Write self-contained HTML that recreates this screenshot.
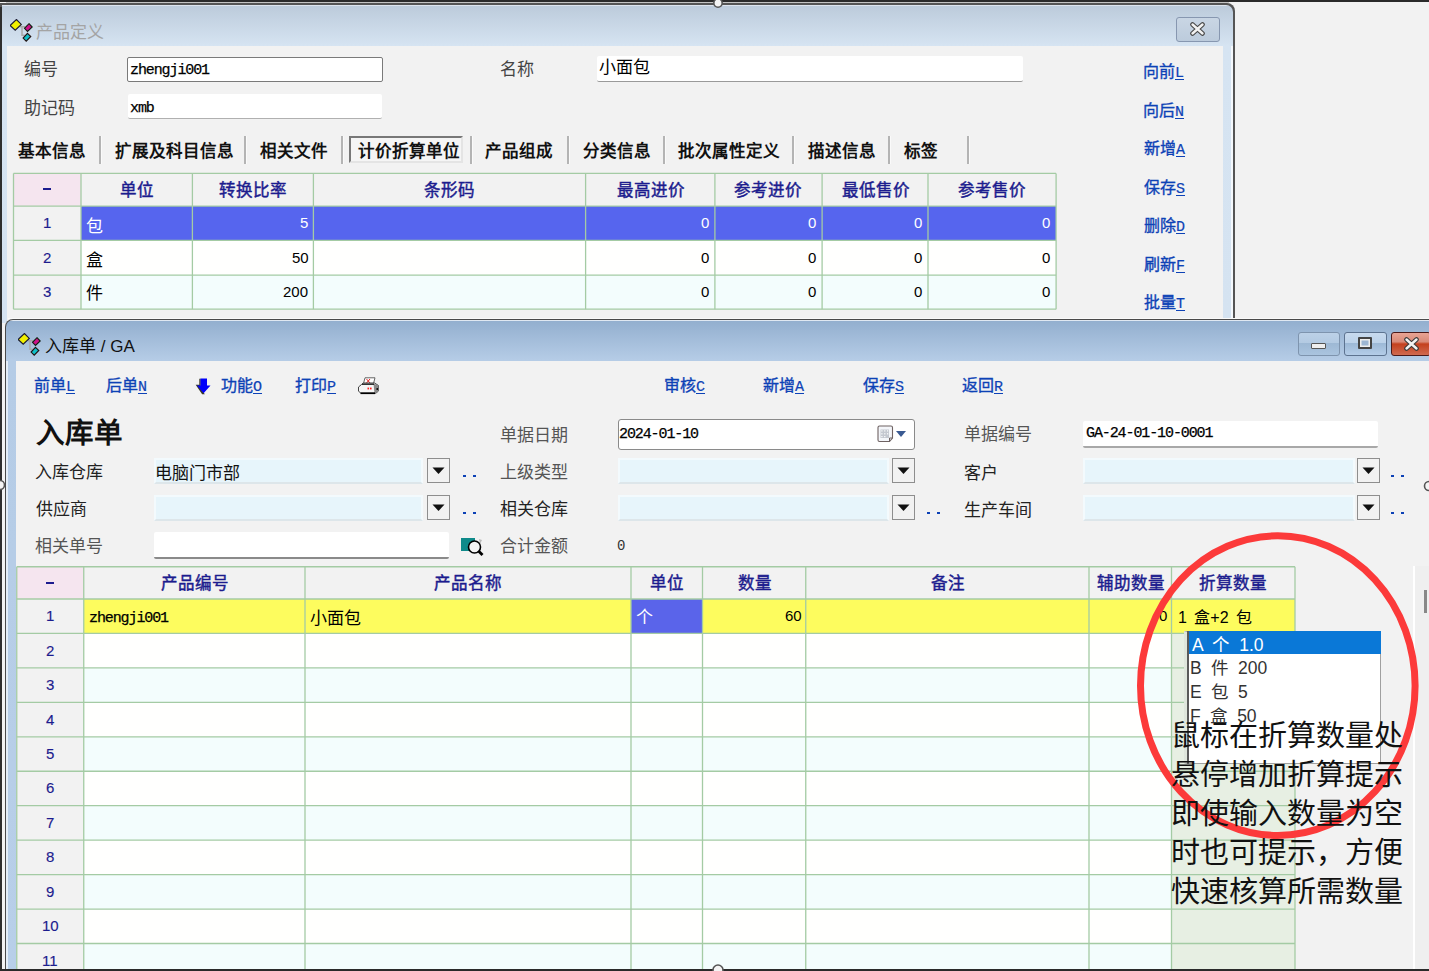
<!DOCTYPE html><html lang="zh-CN"><head><meta charset="utf-8"><style>html,body{margin:0;padding:0;width:1429px;height:971px;overflow:hidden;position:relative;background:#f0f0f0}</style></head><body><div style="position:absolute;left:0px;top:0px;width:1429px;height:971px;background:#f2f2f2"></div>
<div style="position:absolute;left:0px;top:0px;width:1429px;height:2px;background:#2a2a2a"></div>
<div style="position:absolute;left:6px;top:2px;width:1223px;height:1px;background:#c4c4c4"></div>
<div style="position:absolute;left:0px;top:3px;width:1234.5px;height:320px;background:#555;border-top-right-radius:8px"></div>
<div style="position:absolute;left:2px;top:5px;width:1230.5px;height:318px;background:linear-gradient(#dde4ee 0,#dde4ee 1px,#bccbdb 1px,#d6e4f2 41px,#d5e3f1);border-top-right-radius:7px"></div>
<div style="position:absolute;left:1231px;top:46px;width:1.5px;height:280px;background:#f4f8fc"></div>
<div style="position:absolute;left:0px;top:7px;width:2px;height:964px;background:#2e2e2e"></div>
<div style="position:absolute;left:7px;top:46px;width:1216px;height:280px;background:#f2f2f2"></div>
<svg style="position:absolute;left:10px;top:18.5px" width="26" height="24" viewBox="0 0 26 24"><path d="M9.6 7.7 H15 M12 7.7 V16.3 H14.7" stroke="#a8a8a8" stroke-width="1.5" fill="none"/><path d="M6.4 0.5 L11.3 5.4 L5.2 11.2 L0.1 6.5Z" fill="#f0f000" stroke="#1a1a30" stroke-width="1.1"/><path d="M19 4.7 L22.2 8 L17.5 12.4 L14.5 9.3Z" fill="#d0108a" stroke="#102010" stroke-width="1.1"/><path d="M17.5 14.4 L20.8 17.5 L16.2 22.2 L13.1 19.1Z" fill="#10c0c8" stroke="#201010" stroke-width="1.1"/></svg>
<div style="position:absolute;left:36px;top:18px;white-space:nowrap;line-height:normal;font-family:'Liberation Sans',sans-serif;font-size:17px;color:#a4a4a4">产品定义</div>
<div style="position:absolute;left:1176px;top:17px;width:44px;height:25px;box-sizing:border-box;border:1px solid #8797b0;border-radius:3px;background:linear-gradient(#c9d6e4,#bccbdc)"></div>
<svg style="position:absolute;left:1189px;top:22px" width="17" height="14" viewBox="0 0 17 14"><path d="M3.5 2.5 L13.5 11.5 M13.5 2.5 L3.5 11.5" stroke="#474747" stroke-width="4.6" stroke-linecap="round"/><path d="M3.5 2.5 L13.5 11.5 M13.5 2.5 L3.5 11.5" stroke="#f2f2f2" stroke-width="2.4" stroke-linecap="round"/></svg>
<div style="position:absolute;left:24px;top:55px;white-space:nowrap;line-height:normal;font-family:'Liberation Sans',sans-serif;font-size:17px;color:#444">编号</div>
<div style="position:absolute;left:24px;top:94px;white-space:nowrap;line-height:normal;font-family:'Liberation Sans',sans-serif;font-size:17px;color:#444">助记码</div>
<div style="position:absolute;left:500px;top:55px;white-space:nowrap;line-height:normal;font-family:'Liberation Sans',sans-serif;font-size:17px;color:#444">名称</div>
<div style="position:absolute;left:127px;top:57px;width:256px;height:25px;box-sizing:border-box;background:#fff;border:1px solid #7a7a7a;border-radius:2px"></div>
<div style="position:absolute;left:130px;top:62px;white-space:nowrap;line-height:normal;font-family:'Liberation Mono',monospace;font-size:15px;letter-spacing:-1.1px;color:#000;-webkit-text-stroke:0.25px #000">zhengji001</div>
<div style="position:absolute;left:128px;top:94px;width:254px;height:25px;box-sizing:border-box;background:#fff;border-bottom:1px solid #b0b0b0;border-radius:2px"></div>
<div style="position:absolute;left:130px;top:100px;white-space:nowrap;line-height:normal;font-family:'Liberation Mono',monospace;font-size:15px;letter-spacing:-1.1px;color:#000;-webkit-text-stroke:0.25px #000">xmb</div>
<div style="position:absolute;left:597px;top:55.5px;width:426px;height:26px;box-sizing:border-box;background:#fff;border-bottom:1.5px solid #9a9a9a;border-radius:2px"></div>
<div style="position:absolute;left:599px;top:53px;white-space:nowrap;line-height:normal;font-family:'Liberation Sans',sans-serif;font-size:17px;color:#000">小面包</div>
<div style="position:absolute;left:1143px;top:58px;white-space:nowrap;line-height:normal;font-family:'Liberation Sans',sans-serif;font-size:16px;color:#0d42b6;-webkit-text-stroke:0.35px #0d42b6">向前<span style="text-decoration:underline;text-underline-offset:2px;font-family:'Liberation Mono',monospace;font-size:15px;-webkit-text-stroke:0.2px">L</span></div>
<div style="position:absolute;left:1143px;top:97px;white-space:nowrap;line-height:normal;font-family:'Liberation Sans',sans-serif;font-size:16px;color:#0d42b6;-webkit-text-stroke:0.35px #0d42b6">向后<span style="text-decoration:underline;text-underline-offset:2px;font-family:'Liberation Mono',monospace;font-size:15px;-webkit-text-stroke:0.2px">N</span></div>
<div style="position:absolute;left:1144px;top:135px;white-space:nowrap;line-height:normal;font-family:'Liberation Sans',sans-serif;font-size:16px;color:#0d42b6;-webkit-text-stroke:0.35px #0d42b6">新增<span style="text-decoration:underline;text-underline-offset:2px;font-family:'Liberation Mono',monospace;font-size:15px;-webkit-text-stroke:0.2px">A</span></div>
<div style="position:absolute;left:1144px;top:174px;white-space:nowrap;line-height:normal;font-family:'Liberation Sans',sans-serif;font-size:16px;color:#0d42b6;-webkit-text-stroke:0.35px #0d42b6">保存<span style="text-decoration:underline;text-underline-offset:2px;font-family:'Liberation Mono',monospace;font-size:15px;-webkit-text-stroke:0.2px">S</span></div>
<div style="position:absolute;left:1144px;top:212px;white-space:nowrap;line-height:normal;font-family:'Liberation Sans',sans-serif;font-size:16px;color:#0d42b6;-webkit-text-stroke:0.35px #0d42b6">删除<span style="text-decoration:underline;text-underline-offset:2px;font-family:'Liberation Mono',monospace;font-size:15px;-webkit-text-stroke:0.2px">D</span></div>
<div style="position:absolute;left:1144px;top:251px;white-space:nowrap;line-height:normal;font-family:'Liberation Sans',sans-serif;font-size:16px;color:#0d42b6;-webkit-text-stroke:0.35px #0d42b6">刷新<span style="text-decoration:underline;text-underline-offset:2px;font-family:'Liberation Mono',monospace;font-size:15px;-webkit-text-stroke:0.2px">F</span></div>
<div style="position:absolute;left:1144px;top:289px;white-space:nowrap;line-height:normal;font-family:'Liberation Sans',sans-serif;font-size:16px;color:#0d42b6;-webkit-text-stroke:0.35px #0d42b6">批量<span style="text-decoration:underline;text-underline-offset:2px;font-family:'Liberation Mono',monospace;font-size:15px;-webkit-text-stroke:0.2px">T</span></div>
<div style="position:absolute;left:349px;top:136px;width:114px;height:27px;box-sizing:border-box;border:2px solid #787878;border-right-color:#e4e4e4;border-bottom-color:#e4e4e4;background:#f5f5f5"></div>
<div style="position:absolute;left:18px;top:138px;white-space:nowrap;line-height:normal;font-family:'Liberation Sans',sans-serif;font-size:16.5px;color:#111;font-weight:bold">基本信息</div>
<div style="position:absolute;left:115px;top:138px;white-space:nowrap;line-height:normal;font-family:'Liberation Sans',sans-serif;font-size:16.5px;color:#111;font-weight:bold">扩展及科目信息</div>
<div style="position:absolute;left:260px;top:138px;white-space:nowrap;line-height:normal;font-family:'Liberation Sans',sans-serif;font-size:16.5px;color:#111;font-weight:bold">相关文件</div>
<div style="position:absolute;left:358px;top:138px;white-space:nowrap;line-height:normal;font-family:'Liberation Sans',sans-serif;font-size:16.5px;color:#111;font-weight:bold">计价折算单位</div>
<div style="position:absolute;left:485px;top:138px;white-space:nowrap;line-height:normal;font-family:'Liberation Sans',sans-serif;font-size:16.5px;color:#111;font-weight:bold">产品组成</div>
<div style="position:absolute;left:583px;top:138px;white-space:nowrap;line-height:normal;font-family:'Liberation Sans',sans-serif;font-size:16.5px;color:#111;font-weight:bold">分类信息</div>
<div style="position:absolute;left:678px;top:138px;white-space:nowrap;line-height:normal;font-family:'Liberation Sans',sans-serif;font-size:16.5px;color:#111;font-weight:bold">批次属性定义</div>
<div style="position:absolute;left:808px;top:138px;white-space:nowrap;line-height:normal;font-family:'Liberation Sans',sans-serif;font-size:16.5px;color:#111;font-weight:bold">描述信息</div>
<div style="position:absolute;left:904px;top:138px;white-space:nowrap;line-height:normal;font-family:'Liberation Sans',sans-serif;font-size:16.5px;color:#111;font-weight:bold">标签</div>
<div style="position:absolute;left:99px;top:136px;width:2px;height:28px;background:#b4b4b4;border-right:1px solid #fafafa"></div>
<div style="position:absolute;left:244px;top:136px;width:2px;height:28px;background:#b4b4b4;border-right:1px solid #fafafa"></div>
<div style="position:absolute;left:341px;top:136px;width:2px;height:28px;background:#b4b4b4;border-right:1px solid #fafafa"></div>
<div style="position:absolute;left:470px;top:136px;width:2px;height:28px;background:#b4b4b4;border-right:1px solid #fafafa"></div>
<div style="position:absolute;left:566.5px;top:136px;width:2px;height:28px;background:#b4b4b4;border-right:1px solid #fafafa"></div>
<div style="position:absolute;left:662.5px;top:136px;width:2px;height:28px;background:#b4b4b4;border-right:1px solid #fafafa"></div>
<div style="position:absolute;left:792px;top:136px;width:2px;height:28px;background:#b4b4b4;border-right:1px solid #fafafa"></div>
<div style="position:absolute;left:888px;top:136px;width:2px;height:28px;background:#b4b4b4;border-right:1px solid #fafafa"></div>
<div style="position:absolute;left:967px;top:136px;width:2px;height:28px;background:#b4b4b4;border-right:1px solid #fafafa"></div>
<div style="position:absolute;left:13.5px;top:173.4px;width:67.5px;height:32.69999999999999px;background:#f5e5ef"></div>
<div style="position:absolute;left:81px;top:173.4px;width:111.4px;height:32.69999999999999px;background:#f2f2f2"></div>
<div style="position:absolute;left:192.4px;top:173.4px;width:120.99999999999997px;height:32.69999999999999px;background:#f2f2f2"></div>
<div style="position:absolute;left:313.4px;top:173.4px;width:272.20000000000005px;height:32.69999999999999px;background:#f2f2f2"></div>
<div style="position:absolute;left:585.6px;top:173.4px;width:129.29999999999995px;height:32.69999999999999px;background:#f2f2f2"></div>
<div style="position:absolute;left:714.9px;top:173.4px;width:107.20000000000005px;height:32.69999999999999px;background:#f2f2f2"></div>
<div style="position:absolute;left:822.1px;top:173.4px;width:105.89999999999998px;height:32.69999999999999px;background:#f2f2f2"></div>
<div style="position:absolute;left:928.0px;top:173.4px;width:128.0999999999999px;height:32.69999999999999px;background:#f2f2f2"></div>
<div style="position:absolute;left:13.5px;top:206.1px;width:67.5px;height:34.30000000000001px;background:#f2f2f2"></div>
<div style="position:absolute;left:81px;top:206.1px;width:111.4px;height:34.30000000000001px;background:#5665ee"></div>
<div style="position:absolute;left:192.4px;top:206.1px;width:120.99999999999997px;height:34.30000000000001px;background:#5665ee"></div>
<div style="position:absolute;left:313.4px;top:206.1px;width:272.20000000000005px;height:34.30000000000001px;background:#5665ee"></div>
<div style="position:absolute;left:585.6px;top:206.1px;width:129.29999999999995px;height:34.30000000000001px;background:#5665ee"></div>
<div style="position:absolute;left:714.9px;top:206.1px;width:107.20000000000005px;height:34.30000000000001px;background:#5665ee"></div>
<div style="position:absolute;left:822.1px;top:206.1px;width:105.89999999999998px;height:34.30000000000001px;background:#5665ee"></div>
<div style="position:absolute;left:928.0px;top:206.1px;width:128.0999999999999px;height:34.30000000000001px;background:#5665ee"></div>
<div style="position:absolute;left:13.5px;top:240.4px;width:67.5px;height:34.70000000000002px;background:#f2f2f2"></div>
<div style="position:absolute;left:81px;top:240.4px;width:111.4px;height:34.70000000000002px;background:#fffffe"></div>
<div style="position:absolute;left:192.4px;top:240.4px;width:120.99999999999997px;height:34.70000000000002px;background:#fffffe"></div>
<div style="position:absolute;left:313.4px;top:240.4px;width:272.20000000000005px;height:34.70000000000002px;background:#fffffe"></div>
<div style="position:absolute;left:585.6px;top:240.4px;width:129.29999999999995px;height:34.70000000000002px;background:#fffffe"></div>
<div style="position:absolute;left:714.9px;top:240.4px;width:107.20000000000005px;height:34.70000000000002px;background:#fffffe"></div>
<div style="position:absolute;left:822.1px;top:240.4px;width:105.89999999999998px;height:34.70000000000002px;background:#fffffe"></div>
<div style="position:absolute;left:928.0px;top:240.4px;width:128.0999999999999px;height:34.70000000000002px;background:#fffffe"></div>
<div style="position:absolute;left:13.5px;top:275.1px;width:67.5px;height:34.099999999999966px;background:#f2f2f2"></div>
<div style="position:absolute;left:81px;top:275.1px;width:111.4px;height:34.099999999999966px;background:#f3fdfd"></div>
<div style="position:absolute;left:192.4px;top:275.1px;width:120.99999999999997px;height:34.099999999999966px;background:#f3fdfd"></div>
<div style="position:absolute;left:313.4px;top:275.1px;width:272.20000000000005px;height:34.099999999999966px;background:#f3fdfd"></div>
<div style="position:absolute;left:585.6px;top:275.1px;width:129.29999999999995px;height:34.099999999999966px;background:#f3fdfd"></div>
<div style="position:absolute;left:714.9px;top:275.1px;width:107.20000000000005px;height:34.099999999999966px;background:#f3fdfd"></div>
<div style="position:absolute;left:822.1px;top:275.1px;width:105.89999999999998px;height:34.099999999999966px;background:#f3fdfd"></div>
<div style="position:absolute;left:928.0px;top:275.1px;width:128.0999999999999px;height:34.099999999999966px;background:#f3fdfd"></div>
<svg style="position:absolute;left:0;top:0" width="1429" height="971"><g stroke="#a4cba4" stroke-width="1.3" fill="none"><path d="M13.5 173.4 V309.2"/><path d="M81 173.4 V309.2"/><path d="M192.4 173.4 V309.2"/><path d="M313.4 173.4 V309.2"/><path d="M585.6 173.4 V309.2"/><path d="M714.9 173.4 V309.2"/><path d="M822.1 173.4 V309.2"/><path d="M928.0 173.4 V309.2"/><path d="M1056.1 173.4 V309.2"/><path d="M13.5 173.4 H1056.1"/><path d="M13.5 206.1 H1056.1"/><path d="M13.5 240.4 H1056.1"/><path d="M13.5 275.1 H1056.1"/><path d="M13.5 309.2 H1056.1"/></g></svg>
<div style="position:absolute;left:43.25px;top:188.4px;width:8px;height:2px;background:#1c1c8e"></div>
<div style="position:absolute;left:120px;top:177px;white-space:nowrap;line-height:normal;font-family:'Liberation Sans',sans-serif;font-size:16.5px;color:#1c1c8e;-webkit-text-stroke:0.45px #1c1c8e">单位</div>
<div style="position:absolute;left:219px;top:177px;white-space:nowrap;line-height:normal;font-family:'Liberation Sans',sans-serif;font-size:16.5px;color:#1c1c8e;-webkit-text-stroke:0.45px #1c1c8e">转换比率</div>
<div style="position:absolute;left:424px;top:177px;white-space:nowrap;line-height:normal;font-family:'Liberation Sans',sans-serif;font-size:16.5px;color:#1c1c8e;-webkit-text-stroke:0.45px #1c1c8e">条形码</div>
<div style="position:absolute;left:617px;top:177px;white-space:nowrap;line-height:normal;font-family:'Liberation Sans',sans-serif;font-size:16.5px;color:#1c1c8e;-webkit-text-stroke:0.45px #1c1c8e">最高进价</div>
<div style="position:absolute;left:734px;top:177px;white-space:nowrap;line-height:normal;font-family:'Liberation Sans',sans-serif;font-size:16.5px;color:#1c1c8e;-webkit-text-stroke:0.45px #1c1c8e">参考进价</div>
<div style="position:absolute;left:842px;top:177px;white-space:nowrap;line-height:normal;font-family:'Liberation Sans',sans-serif;font-size:16.5px;color:#1c1c8e;-webkit-text-stroke:0.45px #1c1c8e">最低售价</div>
<div style="position:absolute;left:958px;top:177px;white-space:nowrap;line-height:normal;font-family:'Liberation Sans',sans-serif;font-size:16.5px;color:#1c1c8e;-webkit-text-stroke:0.45px #1c1c8e">参考售价</div>
<div style="position:absolute;left:43px;top:214px;white-space:nowrap;line-height:normal;font-family:'Liberation Sans',sans-serif;font-size:15px;color:#1c1c8e;-webkit-text-stroke:0.15px #1c1c8e">1</div>
<div style="position:absolute;left:43px;top:249px;white-space:nowrap;line-height:normal;font-family:'Liberation Sans',sans-serif;font-size:15px;color:#1c1c8e;-webkit-text-stroke:0.15px #1c1c8e">2</div>
<div style="position:absolute;left:43px;top:283px;white-space:nowrap;line-height:normal;font-family:'Liberation Sans',sans-serif;font-size:15px;color:#1c1c8e;-webkit-text-stroke:0.15px #1c1c8e">3</div>
<div style="position:absolute;left:86px;top:212px;white-space:nowrap;line-height:normal;font-family:'Liberation Sans',sans-serif;font-size:17px;color:#fff">包</div>
<div style="position:absolute;left:300px;top:214px;white-space:nowrap;line-height:normal;font-family:'Liberation Sans',sans-serif;font-size:15px;color:#fff">5</div>
<div style="position:absolute;left:701px;top:214px;white-space:nowrap;line-height:normal;font-family:'Liberation Sans',sans-serif;font-size:15px;color:#fff">0</div>
<div style="position:absolute;left:808px;top:214px;white-space:nowrap;line-height:normal;font-family:'Liberation Sans',sans-serif;font-size:15px;color:#fff">0</div>
<div style="position:absolute;left:914px;top:214px;white-space:nowrap;line-height:normal;font-family:'Liberation Sans',sans-serif;font-size:15px;color:#fff">0</div>
<div style="position:absolute;left:1042px;top:214px;white-space:nowrap;line-height:normal;font-family:'Liberation Sans',sans-serif;font-size:15px;color:#fff">0</div>
<div style="position:absolute;left:86px;top:246px;white-space:nowrap;line-height:normal;font-family:'Liberation Sans',sans-serif;font-size:17px;color:#000">盒</div>
<div style="position:absolute;left:292px;top:249px;white-space:nowrap;line-height:normal;font-family:'Liberation Sans',sans-serif;font-size:15px;color:#000">50</div>
<div style="position:absolute;left:701px;top:249px;white-space:nowrap;line-height:normal;font-family:'Liberation Sans',sans-serif;font-size:15px;color:#000">0</div>
<div style="position:absolute;left:808px;top:249px;white-space:nowrap;line-height:normal;font-family:'Liberation Sans',sans-serif;font-size:15px;color:#000">0</div>
<div style="position:absolute;left:914px;top:249px;white-space:nowrap;line-height:normal;font-family:'Liberation Sans',sans-serif;font-size:15px;color:#000">0</div>
<div style="position:absolute;left:1042px;top:249px;white-space:nowrap;line-height:normal;font-family:'Liberation Sans',sans-serif;font-size:15px;color:#000">0</div>
<div style="position:absolute;left:86px;top:279px;white-space:nowrap;line-height:normal;font-family:'Liberation Sans',sans-serif;font-size:17px;color:#000">件</div>
<div style="position:absolute;left:283px;top:283px;white-space:nowrap;line-height:normal;font-family:'Liberation Sans',sans-serif;font-size:15px;color:#000">200</div>
<div style="position:absolute;left:701px;top:283px;white-space:nowrap;line-height:normal;font-family:'Liberation Sans',sans-serif;font-size:15px;color:#000">0</div>
<div style="position:absolute;left:808px;top:283px;white-space:nowrap;line-height:normal;font-family:'Liberation Sans',sans-serif;font-size:15px;color:#000">0</div>
<div style="position:absolute;left:914px;top:283px;white-space:nowrap;line-height:normal;font-family:'Liberation Sans',sans-serif;font-size:15px;color:#000">0</div>
<div style="position:absolute;left:1042px;top:283px;white-space:nowrap;line-height:normal;font-family:'Liberation Sans',sans-serif;font-size:15px;color:#000">0</div>
<div style="position:absolute;left:5px;top:318.5px;width:1424px;height:652px;background:#4a4a4a;border-top-left-radius:8px"></div>
<div style="position:absolute;left:6px;top:320px;width:1423px;height:651px;background:linear-gradient(#e0e8f2 0,#e0e8f2 1px,#93afcf 1px,#b5cce6 40px,#b8cfe9);border-top-left-radius:7px"></div>
<div style="position:absolute;left:6px;top:361px;width:2px;height:610px;background:#e4eef8"></div>
<div style="position:absolute;left:8px;top:317.5px;width:1421px;height:1px;background:#fafafa"></div>
<div style="position:absolute;left:16px;top:361px;width:1413px;height:610px;background:#f2f2f2"></div>
<svg style="position:absolute;left:18px;top:333px" width="26" height="24" viewBox="0 0 26 24"><path d="M9.6 7.7 H15 M12 7.7 V16.3 H14.7" stroke="#a8a8a8" stroke-width="1.5" fill="none"/><path d="M6.4 0.5 L11.3 5.4 L5.2 11.2 L0.1 6.5Z" fill="#f0f000" stroke="#1a1a30" stroke-width="1.1"/><path d="M19 4.7 L22.2 8 L17.5 12.4 L14.5 9.3Z" fill="#d0108a" stroke="#102010" stroke-width="1.1"/><path d="M17.5 14.4 L20.8 17.5 L16.2 22.2 L13.1 19.1Z" fill="#10c0c8" stroke="#201010" stroke-width="1.1"/></svg>
<div style="position:absolute;left:45px;top:332px;white-space:nowrap;line-height:normal;font-family:'Liberation Sans',sans-serif;font-size:17px;color:#111">入库单 / GA</div>
<div style="position:absolute;left:1298px;top:332px;width:42px;height:24px;box-sizing:border-box;border:1px solid #7e94ae;border-radius:3px;background:linear-gradient(#bcd1e7 0,#b3cae2 45%,#9db8d4 46%,#aac4df)"></div>
<div style="position:absolute;left:1344px;top:332px;width:43px;height:24px;box-sizing:border-box;border:1px solid #5d7390;border-radius:3px;background:linear-gradient(#c8daee 0,#bcd2ea 45%,#9cb8d6 46%,#b4cde8)"></div>
<div style="position:absolute;left:1391px;top:332px;width:40px;height:24px;box-sizing:border-box;border:1px solid #4a1a1a;border-radius:3px;background:linear-gradient(#e8a494 0,#d98a78 40%,#c4401e 50%,#d06a50)"></div>
<div style="position:absolute;left:1311px;top:343px;width:15px;height:6px;box-sizing:border-box;border:1px solid #555;background:#eee;border-radius:1px"></div>
<div style="position:absolute;left:1358px;top:337px;width:14px;height:12px;box-sizing:border-box;border:2px solid #444;background:#9db6d2;box-shadow:inset 0 0 0 1.5px #eee;border-radius:1px"></div>
<svg style="position:absolute;left:1403px;top:337px" width="17" height="14" viewBox="0 0 17 14"><path d="M3.5 2.5 L13.5 11.5 M13.5 2.5 L3.5 11.5" stroke="#3a3a3a" stroke-width="4.6" stroke-linecap="round"/><path d="M3.5 2.5 L13.5 11.5 M13.5 2.5 L3.5 11.5" stroke="#f2f2f2" stroke-width="2.4" stroke-linecap="round"/></svg>
<div style="position:absolute;left:34px;top:372px;white-space:nowrap;line-height:normal;font-family:'Liberation Sans',sans-serif;font-size:16px;color:#0d42b6;-webkit-text-stroke:0.35px #0d42b6">前单<span style="text-decoration:underline;text-underline-offset:2px;font-family:'Liberation Mono',monospace;font-size:15px;-webkit-text-stroke:0.2px">L</span></div>
<div style="position:absolute;left:106px;top:372px;white-space:nowrap;line-height:normal;font-family:'Liberation Sans',sans-serif;font-size:16px;color:#0d42b6;-webkit-text-stroke:0.35px #0d42b6">后单<span style="text-decoration:underline;text-underline-offset:2px;font-family:'Liberation Mono',monospace;font-size:15px;-webkit-text-stroke:0.2px">N</span></div>
<div style="position:absolute;left:221px;top:372px;white-space:nowrap;line-height:normal;font-family:'Liberation Sans',sans-serif;font-size:16px;color:#0d42b6;-webkit-text-stroke:0.35px #0d42b6">功能<span style="text-decoration:underline;text-underline-offset:2px;font-family:'Liberation Mono',monospace;font-size:15px;-webkit-text-stroke:0.2px">O</span></div>
<div style="position:absolute;left:295px;top:372px;white-space:nowrap;line-height:normal;font-family:'Liberation Sans',sans-serif;font-size:16px;color:#0d42b6;-webkit-text-stroke:0.35px #0d42b6">打印<span style="text-decoration:underline;text-underline-offset:2px;font-family:'Liberation Mono',monospace;font-size:15px;-webkit-text-stroke:0.2px">P</span></div>
<div style="position:absolute;left:664px;top:372px;white-space:nowrap;line-height:normal;font-family:'Liberation Sans',sans-serif;font-size:16px;color:#0d42b6;-webkit-text-stroke:0.35px #0d42b6">审核<span style="text-decoration:underline;text-underline-offset:2px;font-family:'Liberation Mono',monospace;font-size:15px;-webkit-text-stroke:0.2px">C</span></div>
<div style="position:absolute;left:763px;top:372px;white-space:nowrap;line-height:normal;font-family:'Liberation Sans',sans-serif;font-size:16px;color:#0d42b6;-webkit-text-stroke:0.35px #0d42b6">新增<span style="text-decoration:underline;text-underline-offset:2px;font-family:'Liberation Mono',monospace;font-size:15px;-webkit-text-stroke:0.2px">A</span></div>
<div style="position:absolute;left:863px;top:372px;white-space:nowrap;line-height:normal;font-family:'Liberation Sans',sans-serif;font-size:16px;color:#0d42b6;-webkit-text-stroke:0.35px #0d42b6">保存<span style="text-decoration:underline;text-underline-offset:2px;font-family:'Liberation Mono',monospace;font-size:15px;-webkit-text-stroke:0.2px">S</span></div>
<div style="position:absolute;left:962px;top:372px;white-space:nowrap;line-height:normal;font-family:'Liberation Sans',sans-serif;font-size:16px;color:#0d42b6;-webkit-text-stroke:0.35px #0d42b6">返回<span style="text-decoration:underline;text-underline-offset:2px;font-family:'Liberation Mono',monospace;font-size:15px;-webkit-text-stroke:0.2px">R</span></div>
<div style="position:absolute;left:36px;top:410px;white-space:nowrap;line-height:normal;font-family:'Liberation Serif',serif;font-size:28.5px;font-weight:bold;color:#111">入库单</div>
<div style="position:absolute;left:35px;top:458px;white-space:nowrap;line-height:normal;font-family:'Liberation Sans',sans-serif;font-size:17px;color:#222">入库仓库</div>
<div style="position:absolute;left:36px;top:495px;white-space:nowrap;line-height:normal;font-family:'Liberation Sans',sans-serif;font-size:17px;color:#222">供应商</div>
<div style="position:absolute;left:35px;top:532px;white-space:nowrap;line-height:normal;font-family:'Liberation Sans',sans-serif;font-size:17px;color:#555">相关单号</div>
<div style="position:absolute;left:500px;top:421px;white-space:nowrap;line-height:normal;font-family:'Liberation Sans',sans-serif;font-size:17px;color:#555">单据日期</div>
<div style="position:absolute;left:500px;top:458px;white-space:nowrap;line-height:normal;font-family:'Liberation Sans',sans-serif;font-size:17px;color:#555">上级类型</div>
<div style="position:absolute;left:500px;top:495px;white-space:nowrap;line-height:normal;font-family:'Liberation Sans',sans-serif;font-size:17px;color:#222">相关仓库</div>
<div style="position:absolute;left:500px;top:532px;white-space:nowrap;line-height:normal;font-family:'Liberation Sans',sans-serif;font-size:17px;color:#555">合计金额</div>
<div style="position:absolute;left:964px;top:420px;white-space:nowrap;line-height:normal;font-family:'Liberation Sans',sans-serif;font-size:17px;color:#555">单据编号</div>
<div style="position:absolute;left:964px;top:459px;white-space:nowrap;line-height:normal;font-family:'Liberation Sans',sans-serif;font-size:17px;color:#222">客户</div>
<div style="position:absolute;left:964px;top:496px;white-space:nowrap;line-height:normal;font-family:'Liberation Sans',sans-serif;font-size:17px;color:#222">生产车间</div>
<div style="position:absolute;left:154px;top:457.5px;width:269px;height:26px;box-sizing:border-box;background:#e7f5fb;border:2px solid #f3fafd;border-bottom-color:#dde6ea"></div>
<div style="position:absolute;left:427px;top:457.5px;width:23px;height:25.5px;box-sizing:border-box;background:#f2f2f2;border:1.5px solid #8e8e8e"></div>
<svg style="position:absolute;left:432px;top:466.5px" width="13" height="8"><path d="M0.5 0.5 L12.5 0.5 L6.5 7 Z" fill="#111"/></svg>
<div style="position:absolute;left:154px;top:494.8px;width:269px;height:26px;box-sizing:border-box;background:#e7f5fb;border:2px solid #f3fafd;border-bottom-color:#dde6ea"></div>
<div style="position:absolute;left:427px;top:494.8px;width:23px;height:25.5px;box-sizing:border-box;background:#f2f2f2;border:1.5px solid #8e8e8e"></div>
<svg style="position:absolute;left:432px;top:503.8px" width="13" height="8"><path d="M0.5 0.5 L12.5 0.5 L6.5 7 Z" fill="#111"/></svg>
<div style="position:absolute;left:618px;top:457.5px;width:271px;height:26px;box-sizing:border-box;background:#e7f5fb;border:2px solid #f3fafd;border-bottom-color:#dde6ea"></div>
<div style="position:absolute;left:891.5px;top:457.5px;width:23px;height:25.5px;box-sizing:border-box;background:#f2f2f2;border:1.5px solid #8e8e8e"></div>
<svg style="position:absolute;left:896.5px;top:466.5px" width="13" height="8"><path d="M0.5 0.5 L12.5 0.5 L6.5 7 Z" fill="#111"/></svg>
<div style="position:absolute;left:618px;top:494.8px;width:271px;height:26px;box-sizing:border-box;background:#e7f5fb;border:2px solid #f3fafd;border-bottom-color:#dde6ea"></div>
<div style="position:absolute;left:891.5px;top:494.8px;width:23px;height:25.5px;box-sizing:border-box;background:#f2f2f2;border:1.5px solid #8e8e8e"></div>
<svg style="position:absolute;left:896.5px;top:503.8px" width="13" height="8"><path d="M0.5 0.5 L12.5 0.5 L6.5 7 Z" fill="#111"/></svg>
<div style="position:absolute;left:1083px;top:457.5px;width:272px;height:26px;box-sizing:border-box;background:#e7f5fb;border:2px solid #f3fafd;border-bottom-color:#dde6ea"></div>
<div style="position:absolute;left:1356.8px;top:457.5px;width:23px;height:25.5px;box-sizing:border-box;background:#f2f2f2;border:1.5px solid #8e8e8e"></div>
<svg style="position:absolute;left:1361.8px;top:466.5px" width="13" height="8"><path d="M0.5 0.5 L12.5 0.5 L6.5 7 Z" fill="#111"/></svg>
<div style="position:absolute;left:1083px;top:494.8px;width:272px;height:26px;box-sizing:border-box;background:#e7f5fb;border:2px solid #f3fafd;border-bottom-color:#dde6ea"></div>
<div style="position:absolute;left:1356.8px;top:494.8px;width:23px;height:25.5px;box-sizing:border-box;background:#f2f2f2;border:1.5px solid #8e8e8e"></div>
<svg style="position:absolute;left:1361.8px;top:503.8px" width="13" height="8"><path d="M0.5 0.5 L12.5 0.5 L6.5 7 Z" fill="#111"/></svg>
<div style="position:absolute;left:155px;top:459px;white-space:nowrap;line-height:normal;font-family:'Liberation Sans',sans-serif;font-size:17px;color:#111">电脑门市部</div>
<div style="position:absolute;left:463px;top:475px;width:3px;height:2px;background:#0d42b6"></div>
<div style="position:absolute;left:472.5px;top:475px;width:3px;height:2px;background:#0d42b6"></div>
<div style="position:absolute;left:463px;top:512px;width:3px;height:2px;background:#0d42b6"></div>
<div style="position:absolute;left:472.5px;top:512px;width:3px;height:2px;background:#0d42b6"></div>
<div style="position:absolute;left:927px;top:512px;width:3px;height:2px;background:#0d42b6"></div>
<div style="position:absolute;left:936.5px;top:512px;width:3px;height:2px;background:#0d42b6"></div>
<div style="position:absolute;left:1391px;top:475px;width:3px;height:2px;background:#0d42b6"></div>
<div style="position:absolute;left:1400.5px;top:475px;width:3px;height:2px;background:#0d42b6"></div>
<div style="position:absolute;left:1391px;top:512px;width:3px;height:2px;background:#0d42b6"></div>
<div style="position:absolute;left:1400.5px;top:512px;width:3px;height:2px;background:#0d42b6"></div>
<div style="position:absolute;left:617.7px;top:419px;width:297px;height:30.5px;box-sizing:border-box;background:#fff;border:1px solid #8a8a8a;border-radius:3px"></div>
<div style="position:absolute;left:619px;top:426px;white-space:nowrap;line-height:normal;font-family:'Liberation Mono',monospace;font-size:15px;letter-spacing:-1.1px;color:#000;-webkit-text-stroke:0.25px #000">2024-01-10</div>
<svg style="position:absolute;left:877px;top:425px" width="17" height="18"><path d="M2.5 1 H14 Q15.5 1 15.5 2.5 V13 L12.5 16.5 H2.5 Q1 16.5 1 15 V2.5 Q1 1 2.5 1Z" fill="#f4f6fa" stroke="#6e6262" stroke-width="1.1"/><rect x="3.5" y="4.5" width="8.5" height="8.5" fill="#c4c8d0"/><g fill="#fff"><rect x="4.3" y="5.3" width="1.2" height="1.2"/><rect x="7.2" y="5.3" width="1.2" height="1.2"/><rect x="10" y="5.3" width="1.2" height="1.2"/><rect x="4.3" y="8.2" width="1.2" height="1.2"/><rect x="7.2" y="8.2" width="1.2" height="1.2"/><rect x="10" y="8.2" width="1.2" height="1.2"/><rect x="4.3" y="11" width="1.2" height="1.2"/><rect x="7.2" y="11" width="1.2" height="1.2"/></g><path d="M12.5 16.5 V13 H15.5" fill="none" stroke="#6e6262" stroke-width="1"/></svg>
<svg style="position:absolute;left:895.5px;top:431px" width="10" height="6"><path d="M0 0 L10 0 L5 6Z" fill="#3a5a92"/></svg>
<div style="position:absolute;left:1083.4px;top:421.3px;width:295px;height:26.5px;box-sizing:border-box;background:#fff;border-bottom:2px solid #a8a8a8;border-radius:2px"></div>
<div style="position:absolute;left:1086px;top:425px;white-space:nowrap;line-height:normal;font-family:'Liberation Mono',monospace;font-size:15px;letter-spacing:-1.1px;color:#000;-webkit-text-stroke:0.25px #000">GA-24-01-10-0001</div>
<div style="position:absolute;left:154px;top:532px;width:295px;height:26.5px;box-sizing:border-box;background:#fff;border-bottom:2px solid #8a8a8a;border-radius:2px"></div>
<div style="position:absolute;left:617px;top:538px;white-space:nowrap;line-height:normal;font-family:'Liberation Mono',monospace;font-size:14px;color:#333">0</div>
<div style="position:absolute;left:461px;top:538px;width:14px;height:13px;background:#0f8a8a"></div>
<svg style="position:absolute;left:467px;top:539px" width="18" height="18"><path d="M12 0 L15 1 L13 5Z" fill="#bbb"/><circle cx="7.5" cy="8" r="6" fill="#f4f4f4" stroke="#000" stroke-width="1.6"/><path d="M11.5 12 L15.5 16" stroke="#000" stroke-width="2.8"/></svg>
<svg style="position:absolute;left:357px;top:376px" width="23" height="19"><path d="M8 1.8 H18 L16.5 7.5 H6.5Z" fill="#fff" stroke="#555" stroke-width="0.9"/><path d="M9.5 3 L13 7 M13 3 L9.5 7" stroke="#e62020" stroke-width="1"/><path d="M4.5 8.5 L6.5 7 H17.5 L21.5 9.5 V15 L18.5 17.5 H4 L1.5 15 V11Z" fill="#f6f6f6" stroke="#444" stroke-width="1"/><path d="M16.5 7.5 L21.5 9.5 V15 L18.5 17.5 L17.5 17.5 Z" fill="#8a8a8a"/><path d="M3.5 17.2 H18" stroke="#000" stroke-width="1.8"/><path d="M5 8.2 H17" stroke="#111" stroke-width="1.3"/><rect x="10.5" y="11.6" width="1.6" height="1.8" fill="#f22"/><rect x="13" y="11.6" width="1.6" height="1.8" fill="#f22"/><rect x="19.5" y="12" width="1.5" height="2" fill="#111"/></svg>
<svg style="position:absolute;left:195px;top:377px" width="17" height="18"><path d="M5 1.8 L5 8.5 L2 8.5 L7.5 16.5 L8.5 16.5 L3.5 9.5" fill="none" stroke="#3a3a2a" stroke-width="1.4"/><path d="M5.5 1.5 L12 1.5 L12 8.5 L15.5 8.5 L8.6 16.2 L2 8.5 L5.5 8.5Z" fill="#0000fa"/></svg>
<div style="position:absolute;left:16.75px;top:566.75px;width:67.0px;height:32.25px;background:#f5e5ef"></div>
<div style="position:absolute;left:83.75px;top:566.75px;width:221.25px;height:32.25px;background:#f2f2f2"></div>
<div style="position:absolute;left:305px;top:566.75px;width:326px;height:32.25px;background:#f2f2f2"></div>
<div style="position:absolute;left:631px;top:566.75px;width:71.5px;height:32.25px;background:#f2f2f2"></div>
<div style="position:absolute;left:702.5px;top:566.75px;width:103.25px;height:32.25px;background:#f2f2f2"></div>
<div style="position:absolute;left:805.75px;top:566.75px;width:283.25px;height:32.25px;background:#f2f2f2"></div>
<div style="position:absolute;left:1089px;top:566.75px;width:82.5px;height:32.25px;background:#f2f2f2"></div>
<div style="position:absolute;left:1171.5px;top:566.75px;width:123.5px;height:32.25px;background:#f2f2f2"></div>
<div style="position:absolute;left:16.75px;top:599px;width:67.0px;height:34.450000000000045px;background:#f2f2f2"></div>
<div style="position:absolute;left:83.75px;top:599px;width:221.25px;height:34.450000000000045px;background:#fdfc5e"></div>
<div style="position:absolute;left:305px;top:599px;width:326px;height:34.450000000000045px;background:#fdfc5e"></div>
<div style="position:absolute;left:631px;top:599px;width:71.5px;height:34.450000000000045px;background:#5a64ea"></div>
<div style="position:absolute;left:702.5px;top:599px;width:103.25px;height:34.450000000000045px;background:#fdfc5e"></div>
<div style="position:absolute;left:805.75px;top:599px;width:283.25px;height:34.450000000000045px;background:#fdfc5e"></div>
<div style="position:absolute;left:1089px;top:599px;width:82.5px;height:34.450000000000045px;background:#fdfc5e"></div>
<div style="position:absolute;left:1171.5px;top:599px;width:123.5px;height:34.450000000000045px;background:#fdfc5e"></div>
<div style="position:absolute;left:16.75px;top:633.45px;width:67.0px;height:34.44999999999993px;background:#f2f2f2"></div>
<div style="position:absolute;left:83.75px;top:633.45px;width:221.25px;height:34.44999999999993px;background:#fffffe"></div>
<div style="position:absolute;left:305px;top:633.45px;width:326px;height:34.44999999999993px;background:#fffffe"></div>
<div style="position:absolute;left:631px;top:633.45px;width:71.5px;height:34.44999999999993px;background:#fffffe"></div>
<div style="position:absolute;left:702.5px;top:633.45px;width:103.25px;height:34.44999999999993px;background:#fffffe"></div>
<div style="position:absolute;left:805.75px;top:633.45px;width:283.25px;height:34.44999999999993px;background:#fffffe"></div>
<div style="position:absolute;left:1089px;top:633.45px;width:82.5px;height:34.44999999999993px;background:#fffffe"></div>
<div style="position:absolute;left:1171.5px;top:633.45px;width:123.5px;height:34.44999999999993px;background:#e7efe3"></div>
<div style="position:absolute;left:16.75px;top:667.9px;width:67.0px;height:34.450000000000045px;background:#f2f2f2"></div>
<div style="position:absolute;left:83.75px;top:667.9px;width:221.25px;height:34.450000000000045px;background:#f3fdfd"></div>
<div style="position:absolute;left:305px;top:667.9px;width:326px;height:34.450000000000045px;background:#f3fdfd"></div>
<div style="position:absolute;left:631px;top:667.9px;width:71.5px;height:34.450000000000045px;background:#f3fdfd"></div>
<div style="position:absolute;left:702.5px;top:667.9px;width:103.25px;height:34.450000000000045px;background:#f3fdfd"></div>
<div style="position:absolute;left:805.75px;top:667.9px;width:283.25px;height:34.450000000000045px;background:#f3fdfd"></div>
<div style="position:absolute;left:1089px;top:667.9px;width:82.5px;height:34.450000000000045px;background:#f3fdfd"></div>
<div style="position:absolute;left:1171.5px;top:667.9px;width:123.5px;height:34.450000000000045px;background:#e7efe3"></div>
<div style="position:absolute;left:16.75px;top:702.35px;width:67.0px;height:34.44999999999993px;background:#f2f2f2"></div>
<div style="position:absolute;left:83.75px;top:702.35px;width:221.25px;height:34.44999999999993px;background:#fffffe"></div>
<div style="position:absolute;left:305px;top:702.35px;width:326px;height:34.44999999999993px;background:#fffffe"></div>
<div style="position:absolute;left:631px;top:702.35px;width:71.5px;height:34.44999999999993px;background:#fffffe"></div>
<div style="position:absolute;left:702.5px;top:702.35px;width:103.25px;height:34.44999999999993px;background:#fffffe"></div>
<div style="position:absolute;left:805.75px;top:702.35px;width:283.25px;height:34.44999999999993px;background:#fffffe"></div>
<div style="position:absolute;left:1089px;top:702.35px;width:82.5px;height:34.44999999999993px;background:#fffffe"></div>
<div style="position:absolute;left:1171.5px;top:702.35px;width:123.5px;height:34.44999999999993px;background:#e7efe3"></div>
<div style="position:absolute;left:16.75px;top:736.8px;width:67.0px;height:34.450000000000045px;background:#f2f2f2"></div>
<div style="position:absolute;left:83.75px;top:736.8px;width:221.25px;height:34.450000000000045px;background:#f3fdfd"></div>
<div style="position:absolute;left:305px;top:736.8px;width:326px;height:34.450000000000045px;background:#f3fdfd"></div>
<div style="position:absolute;left:631px;top:736.8px;width:71.5px;height:34.450000000000045px;background:#f3fdfd"></div>
<div style="position:absolute;left:702.5px;top:736.8px;width:103.25px;height:34.450000000000045px;background:#f3fdfd"></div>
<div style="position:absolute;left:805.75px;top:736.8px;width:283.25px;height:34.450000000000045px;background:#f3fdfd"></div>
<div style="position:absolute;left:1089px;top:736.8px;width:82.5px;height:34.450000000000045px;background:#f3fdfd"></div>
<div style="position:absolute;left:1171.5px;top:736.8px;width:123.5px;height:34.450000000000045px;background:#e7efe3"></div>
<div style="position:absolute;left:16.75px;top:771.25px;width:67.0px;height:34.450000000000045px;background:#f2f2f2"></div>
<div style="position:absolute;left:83.75px;top:771.25px;width:221.25px;height:34.450000000000045px;background:#fffffe"></div>
<div style="position:absolute;left:305px;top:771.25px;width:326px;height:34.450000000000045px;background:#fffffe"></div>
<div style="position:absolute;left:631px;top:771.25px;width:71.5px;height:34.450000000000045px;background:#fffffe"></div>
<div style="position:absolute;left:702.5px;top:771.25px;width:103.25px;height:34.450000000000045px;background:#fffffe"></div>
<div style="position:absolute;left:805.75px;top:771.25px;width:283.25px;height:34.450000000000045px;background:#fffffe"></div>
<div style="position:absolute;left:1089px;top:771.25px;width:82.5px;height:34.450000000000045px;background:#fffffe"></div>
<div style="position:absolute;left:1171.5px;top:771.25px;width:123.5px;height:34.450000000000045px;background:#e7efe3"></div>
<div style="position:absolute;left:16.75px;top:805.7px;width:67.0px;height:34.450000000000045px;background:#f2f2f2"></div>
<div style="position:absolute;left:83.75px;top:805.7px;width:221.25px;height:34.450000000000045px;background:#f3fdfd"></div>
<div style="position:absolute;left:305px;top:805.7px;width:326px;height:34.450000000000045px;background:#f3fdfd"></div>
<div style="position:absolute;left:631px;top:805.7px;width:71.5px;height:34.450000000000045px;background:#f3fdfd"></div>
<div style="position:absolute;left:702.5px;top:805.7px;width:103.25px;height:34.450000000000045px;background:#f3fdfd"></div>
<div style="position:absolute;left:805.75px;top:805.7px;width:283.25px;height:34.450000000000045px;background:#f3fdfd"></div>
<div style="position:absolute;left:1089px;top:805.7px;width:82.5px;height:34.450000000000045px;background:#f3fdfd"></div>
<div style="position:absolute;left:1171.5px;top:805.7px;width:123.5px;height:34.450000000000045px;background:#e7efe3"></div>
<div style="position:absolute;left:16.75px;top:840.1500000000001px;width:67.0px;height:34.44999999999993px;background:#f2f2f2"></div>
<div style="position:absolute;left:83.75px;top:840.1500000000001px;width:221.25px;height:34.44999999999993px;background:#fffffe"></div>
<div style="position:absolute;left:305px;top:840.1500000000001px;width:326px;height:34.44999999999993px;background:#fffffe"></div>
<div style="position:absolute;left:631px;top:840.1500000000001px;width:71.5px;height:34.44999999999993px;background:#fffffe"></div>
<div style="position:absolute;left:702.5px;top:840.1500000000001px;width:103.25px;height:34.44999999999993px;background:#fffffe"></div>
<div style="position:absolute;left:805.75px;top:840.1500000000001px;width:283.25px;height:34.44999999999993px;background:#fffffe"></div>
<div style="position:absolute;left:1089px;top:840.1500000000001px;width:82.5px;height:34.44999999999993px;background:#fffffe"></div>
<div style="position:absolute;left:1171.5px;top:840.1500000000001px;width:123.5px;height:34.44999999999993px;background:#e7efe3"></div>
<div style="position:absolute;left:16.75px;top:874.6px;width:67.0px;height:34.44999999999993px;background:#f2f2f2"></div>
<div style="position:absolute;left:83.75px;top:874.6px;width:221.25px;height:34.44999999999993px;background:#f3fdfd"></div>
<div style="position:absolute;left:305px;top:874.6px;width:326px;height:34.44999999999993px;background:#f3fdfd"></div>
<div style="position:absolute;left:631px;top:874.6px;width:71.5px;height:34.44999999999993px;background:#f3fdfd"></div>
<div style="position:absolute;left:702.5px;top:874.6px;width:103.25px;height:34.44999999999993px;background:#f3fdfd"></div>
<div style="position:absolute;left:805.75px;top:874.6px;width:283.25px;height:34.44999999999993px;background:#f3fdfd"></div>
<div style="position:absolute;left:1089px;top:874.6px;width:82.5px;height:34.44999999999993px;background:#f3fdfd"></div>
<div style="position:absolute;left:1171.5px;top:874.6px;width:123.5px;height:34.44999999999993px;background:#e7efe3"></div>
<div style="position:absolute;left:16.75px;top:909.05px;width:67.0px;height:34.450000000000045px;background:#f2f2f2"></div>
<div style="position:absolute;left:83.75px;top:909.05px;width:221.25px;height:34.450000000000045px;background:#fffffe"></div>
<div style="position:absolute;left:305px;top:909.05px;width:326px;height:34.450000000000045px;background:#fffffe"></div>
<div style="position:absolute;left:631px;top:909.05px;width:71.5px;height:34.450000000000045px;background:#fffffe"></div>
<div style="position:absolute;left:702.5px;top:909.05px;width:103.25px;height:34.450000000000045px;background:#fffffe"></div>
<div style="position:absolute;left:805.75px;top:909.05px;width:283.25px;height:34.450000000000045px;background:#fffffe"></div>
<div style="position:absolute;left:1089px;top:909.05px;width:82.5px;height:34.450000000000045px;background:#fffffe"></div>
<div style="position:absolute;left:1171.5px;top:909.05px;width:123.5px;height:34.450000000000045px;background:#e7efe3"></div>
<div style="position:absolute;left:16.75px;top:943.5px;width:67.0px;height:34.450000000000045px;background:#f2f2f2"></div>
<div style="position:absolute;left:83.75px;top:943.5px;width:221.25px;height:34.450000000000045px;background:#f3fdfd"></div>
<div style="position:absolute;left:305px;top:943.5px;width:326px;height:34.450000000000045px;background:#f3fdfd"></div>
<div style="position:absolute;left:631px;top:943.5px;width:71.5px;height:34.450000000000045px;background:#f3fdfd"></div>
<div style="position:absolute;left:702.5px;top:943.5px;width:103.25px;height:34.450000000000045px;background:#f3fdfd"></div>
<div style="position:absolute;left:805.75px;top:943.5px;width:283.25px;height:34.450000000000045px;background:#f3fdfd"></div>
<div style="position:absolute;left:1089px;top:943.5px;width:82.5px;height:34.450000000000045px;background:#f3fdfd"></div>
<div style="position:absolute;left:1171.5px;top:943.5px;width:123.5px;height:34.450000000000045px;background:#e7efe3"></div>
<svg style="position:absolute;left:0;top:0" width="1429" height="971"><g stroke="#a4cba4" stroke-width="1.3" fill="none"><path d="M16.75 566.75 V977.95"/><path d="M83.75 566.75 V977.95"/><path d="M305 566.75 V977.95"/><path d="M631 566.75 V977.95"/><path d="M702.5 566.75 V977.95"/><path d="M805.75 566.75 V977.95"/><path d="M1089 566.75 V977.95"/><path d="M1171.5 566.75 V977.95"/><path d="M1295 566.75 V977.95"/><path d="M16.75 566.75 H1295"/><path d="M16.75 599 H1295"/><path d="M16.75 633.45 H1295"/><path d="M16.75 667.9 H1295"/><path d="M16.75 702.35 H1295"/><path d="M16.75 736.8 H1295"/><path d="M16.75 771.25 H1295"/><path d="M16.75 805.7 H1295"/><path d="M16.75 840.1500000000001 H1295"/><path d="M16.75 874.6 H1295"/><path d="M16.75 909.05 H1295"/><path d="M16.75 943.5 H1295"/><path d="M16.75 977.95 H1295"/></g></svg>
<div style="position:absolute;left:46.25px;top:581.75px;width:8px;height:2px;background:#1c1c8e"></div>
<div style="position:absolute;left:161px;top:570px;white-space:nowrap;line-height:normal;font-family:'Liberation Sans',sans-serif;font-size:16.5px;color:#1c1c8e;-webkit-text-stroke:0.45px #1c1c8e">产品编号</div>
<div style="position:absolute;left:434px;top:570px;white-space:nowrap;line-height:normal;font-family:'Liberation Sans',sans-serif;font-size:16.5px;color:#1c1c8e;-webkit-text-stroke:0.45px #1c1c8e">产品名称</div>
<div style="position:absolute;left:650px;top:570px;white-space:nowrap;line-height:normal;font-family:'Liberation Sans',sans-serif;font-size:16.5px;color:#1c1c8e;-webkit-text-stroke:0.45px #1c1c8e">单位</div>
<div style="position:absolute;left:738px;top:570px;white-space:nowrap;line-height:normal;font-family:'Liberation Sans',sans-serif;font-size:16.5px;color:#1c1c8e;-webkit-text-stroke:0.45px #1c1c8e">数量</div>
<div style="position:absolute;left:931px;top:570px;white-space:nowrap;line-height:normal;font-family:'Liberation Sans',sans-serif;font-size:16.5px;color:#1c1c8e;-webkit-text-stroke:0.45px #1c1c8e">备注</div>
<div style="position:absolute;left:1097px;top:570px;white-space:nowrap;line-height:normal;font-family:'Liberation Sans',sans-serif;font-size:16.5px;color:#1c1c8e;-webkit-text-stroke:0.45px #1c1c8e">辅助数量</div>
<div style="position:absolute;left:1199px;top:570px;white-space:nowrap;line-height:normal;font-family:'Liberation Sans',sans-serif;font-size:16.5px;color:#1c1c8e;-webkit-text-stroke:0.45px #1c1c8e">折算数量</div>
<div style="position:absolute;left:46px;top:607px;white-space:nowrap;line-height:normal;font-family:'Liberation Sans',sans-serif;font-size:15px;color:#1c1c8e;-webkit-text-stroke:0.15px #1c1c8e">1</div>
<div style="position:absolute;left:46px;top:642px;white-space:nowrap;line-height:normal;font-family:'Liberation Sans',sans-serif;font-size:15px;color:#1c1c8e;-webkit-text-stroke:0.15px #1c1c8e">2</div>
<div style="position:absolute;left:46px;top:676px;white-space:nowrap;line-height:normal;font-family:'Liberation Sans',sans-serif;font-size:15px;color:#1c1c8e;-webkit-text-stroke:0.15px #1c1c8e">3</div>
<div style="position:absolute;left:46px;top:711px;white-space:nowrap;line-height:normal;font-family:'Liberation Sans',sans-serif;font-size:15px;color:#1c1c8e;-webkit-text-stroke:0.15px #1c1c8e">4</div>
<div style="position:absolute;left:46px;top:745px;white-space:nowrap;line-height:normal;font-family:'Liberation Sans',sans-serif;font-size:15px;color:#1c1c8e;-webkit-text-stroke:0.15px #1c1c8e">5</div>
<div style="position:absolute;left:46px;top:779px;white-space:nowrap;line-height:normal;font-family:'Liberation Sans',sans-serif;font-size:15px;color:#1c1c8e;-webkit-text-stroke:0.15px #1c1c8e">6</div>
<div style="position:absolute;left:46px;top:814px;white-space:nowrap;line-height:normal;font-family:'Liberation Sans',sans-serif;font-size:15px;color:#1c1c8e;-webkit-text-stroke:0.15px #1c1c8e">7</div>
<div style="position:absolute;left:46px;top:848px;white-space:nowrap;line-height:normal;font-family:'Liberation Sans',sans-serif;font-size:15px;color:#1c1c8e;-webkit-text-stroke:0.15px #1c1c8e">8</div>
<div style="position:absolute;left:46px;top:883px;white-space:nowrap;line-height:normal;font-family:'Liberation Sans',sans-serif;font-size:15px;color:#1c1c8e;-webkit-text-stroke:0.15px #1c1c8e">9</div>
<div style="position:absolute;left:42px;top:917px;white-space:nowrap;line-height:normal;font-family:'Liberation Sans',sans-serif;font-size:15px;color:#1c1c8e;-webkit-text-stroke:0.15px #1c1c8e">10</div>
<div style="position:absolute;left:42px;top:952px;white-space:nowrap;line-height:normal;font-family:'Liberation Sans',sans-serif;font-size:15px;color:#1c1c8e;-webkit-text-stroke:0.15px #1c1c8e">11</div>
<div style="position:absolute;left:89px;top:610px;white-space:nowrap;line-height:normal;font-family:'Liberation Mono',monospace;font-size:15px;letter-spacing:-1.1px;color:#000;-webkit-text-stroke:0.25px #000">zhengji001</div>
<div style="position:absolute;left:310px;top:604px;white-space:nowrap;line-height:normal;font-family:'Liberation Sans',sans-serif;font-size:17px;color:#000">小面包</div>
<div style="position:absolute;left:636px;top:603px;white-space:nowrap;line-height:normal;font-family:'Liberation Sans',sans-serif;font-size:17px;color:#fff">个</div>
<div style="position:absolute;left:785px;top:607px;white-space:nowrap;line-height:normal;font-family:'Liberation Sans',sans-serif;font-size:15px;color:#000">60</div>
<div style="position:absolute;left:1159px;top:607px;white-space:nowrap;line-height:normal;font-family:'Liberation Sans',sans-serif;font-size:15px;color:#000">0</div>
<div style="position:absolute;left:1178px;top:604px;white-space:nowrap;line-height:normal;font-family:'Liberation Sans',sans-serif;font-size:16px;color:#000;word-spacing:3px">1 盒+2 包</div>
<div style="position:absolute;left:1413px;top:566px;width:1.5px;height:405px;background:#fff"></div>
<div style="position:absolute;left:1414.5px;top:566px;width:15px;height:405px;background:#efefef"></div>
<div style="position:absolute;left:1424px;top:589.5px;width:3px;height:23px;background:#888"></div>
<div style="position:absolute;left:1183.5px;top:631px;width:197.5px;height:132.5px;box-sizing:border-box;background:#fff;border:1px solid #a0a0a0;border-left:3.5px solid #dfe6dc"></div>
<div style="position:absolute;left:1187px;top:631px;width:1.5px;height:132.5px;background:#5a5a5a"></div>
<div style="position:absolute;left:1188.5px;top:631px;width:192.5px;height:23px;background:#0a78d7"></div>
<div style="position:absolute;left:1192px;top:631px;white-space:nowrap;line-height:normal;font-family:'Liberation Sans',sans-serif;font-size:17.5px;color:#fff">A &nbsp;个 &nbsp;1.0</div>
<div style="position:absolute;left:1190px;top:654px;white-space:nowrap;line-height:normal;font-family:'Liberation Sans',sans-serif;font-size:17.5px;color:#333">B &nbsp;件 &nbsp;200</div>
<div style="position:absolute;left:1190px;top:678px;white-space:nowrap;line-height:normal;font-family:'Liberation Sans',sans-serif;font-size:17.5px;color:#333">E &nbsp;包 &nbsp;5</div>
<div style="position:absolute;left:1190px;top:702px;white-space:nowrap;line-height:normal;font-family:'Liberation Sans',sans-serif;font-size:17.5px;color:#333">F &nbsp;盒 &nbsp;50</div>
<svg style="position:absolute;left:1130px;top:525px" width="300" height="320"><ellipse cx="147.8" cy="160.65" rx="137.3" ry="149.85" fill="none" stroke="#fc3a3a" stroke-width="7"/></svg>
<div style="position:absolute;left:1171px;top:712px;white-space:nowrap;line-height:normal;font-family:'Liberation Sans',sans-serif;font-size:29px;color:#111">鼠标在折算数量处</div>
<div style="position:absolute;left:1171px;top:751px;white-space:nowrap;line-height:normal;font-family:'Liberation Sans',sans-serif;font-size:29px;color:#111">悬停增加折算提示</div>
<div style="position:absolute;left:1171px;top:790px;white-space:nowrap;line-height:normal;font-family:'Liberation Sans',sans-serif;font-size:29px;color:#111">即使输入数量为空</div>
<div style="position:absolute;left:1171px;top:829px;white-space:nowrap;line-height:normal;font-family:'Liberation Sans',sans-serif;font-size:29px;color:#111">时也可提示，方便</div>
<div style="position:absolute;left:1171px;top:868px;white-space:nowrap;line-height:normal;font-family:'Liberation Sans',sans-serif;font-size:29px;color:#111">快速核算所需数量</div>
<div style="position:absolute;left:0px;top:968.5px;width:1429px;height:2.5px;background:#2a2a2a"></div>
<svg style="position:absolute;left:710.5px;top:-4px" width="14" height="14"><circle cx="7" cy="7" r="4.2" fill="#f4f4f4" stroke="#555" stroke-width="1.6"/></svg>
<svg style="position:absolute;left:710.5px;top:962.5px" width="14" height="14"><circle cx="7" cy="7" r="5" fill="#f4f4f4" stroke="#555" stroke-width="1.6"/></svg>
<svg style="position:absolute;left:-7px;top:478px" width="14" height="14"><circle cx="7" cy="7" r="4.5" fill="#f4f4f4" stroke="#555" stroke-width="1.6"/></svg>
<svg style="position:absolute;left:1422px;top:478.5px" width="14" height="14"><circle cx="7" cy="7" r="4.5" fill="#f4f4f4" stroke="#555" stroke-width="1.6"/></svg></body></html>
